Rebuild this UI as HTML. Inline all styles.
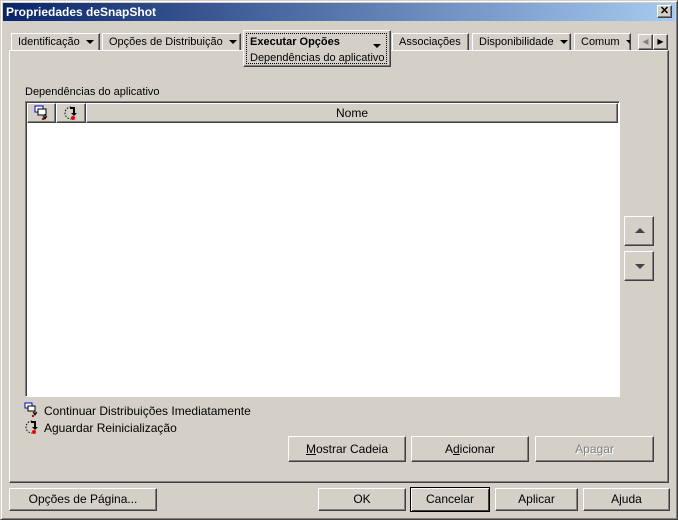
<!DOCTYPE html><html><head><style>
*{box-sizing:border-box}
body{margin:0;width:678px;height:520px;background:#d4d0c8;font-family:"Liberation Sans",sans-serif;font-size:11px;position:relative;overflow:hidden;color:#000}
.a{position:absolute}
.win{left:0;top:0;width:678px;height:520px;border:1px solid;border-color:#d4d0c8 #404040 #404040 #d4d0c8;box-shadow:inset 1px 1px #fff,inset -1px -1px #808080}
.title{left:3px;top:3px;width:672px;height:18px;background:linear-gradient(90deg,#0a246a,#a6caf0);color:#fff;font-weight:bold;font-size:12px;padding:2px 3px}
.btn{position:absolute;background:#d4d0c8;border:1px solid;border-color:#fff #404040 #404040 #fff;box-shadow:inset -1px -1px #808080;text-align:center;line-height:20px}
.tab{position:absolute;top:33px;height:17px;border:1px solid;border-color:#fff #404040 transparent #fff;border-bottom:none;box-shadow:inset -1px 0 #808080;padding:2px 6px;white-space:nowrap}
.tri{display:inline-block;width:0;height:0;border-left:4px solid transparent;border-right:4px solid transparent;border-top:4px solid #000;vertical-align:middle;margin-left:6px}
u{text-decoration:underline}
</style></head><body>
<div class="a win"></div>
<div class="a title">Propriedades deSnapShot</div>
<div class="btn" style="left:657px;top:5px;width:15px;height:13px;line-height:11px;font-size:11px;font-weight:bold">✕</div>
<!-- panel -->
<div class="a" style="left:9px;top:50px;width:660px;height:433px;border:1px solid;border-color:#fff #404040 #404040 #fff;box-shadow:inset -1px -1px #808080"></div>
<div class="tab" style="left:11px;width:89px">Identificação<span class="tri"></span></div>
<div class="tab" style="left:102px;width:139px">Opções de Distribuição<span class="tri"></span></div>
<div class="a" style="left:243px;top:30px;width:148px;height:37px;background:#d4d0c8;border:1px solid;border-color:#fff #404040 #404040 #fff;box-shadow:inset -1px -1px #808080"></div>
<div class="a" style="left:246px;top:33px;width:141px;height:31px;border:1px dotted #000"></div>
<div class="a" style="left:250px;top:36px;font-weight:bold">Executar Opções</div>
<div class="a" style="left:373px;top:40px"><span class="tri" style="margin:0"></span></div>
<div class="a" style="left:250px;top:52px">Dependências do aplicativo</div>
<div class="tab" style="left:392px;width:77px">Associações</div>
<div class="tab" style="left:472px;width:99px">Disponibilidade<span class="tri"></span></div>
<div class="tab" style="left:574px;width:57px;overflow:hidden">Comum<span class="tri"></span></div>
<div class="btn" style="left:638px;top:34px;width:15px;height:16px;color:#808080;font-size:8px;line-height:14px">◀</div>
<div class="btn" style="left:653px;top:34px;width:15px;height:16px;font-size:8px;line-height:14px">▶</div>
<div class="a" style="left:25px;top:86px">Dependências do aplicativo</div>
<!-- list -->
<div class="a" style="left:25px;top:101px;width:595px;height:296px;background:#fff;border:1px solid;border-color:#808080 #fff #fff #808080;box-shadow:inset 1px 1px #404040"></div>
<div class="btn" style="left:27px;top:103px;width:29px;height:20px"><svg width="16" height="16" style="margin-top:1px"><rect x="1" y="1" width="8" height="6" fill="#fff" stroke="#00c"/><rect x="4" y="4" width="8" height="6" fill="#fff" stroke="#000"/><path d="M11 9v4M9 11l2 3 2-3" stroke="#000" fill="none"/><circle cx="9" cy="14" r="1.2" fill="#c00"/></svg></div>
<div class="btn" style="left:56px;top:103px;width:30px;height:20px"><svg width="16" height="16" style="margin-top:1px"><path d="M8 2a6 6 0 1 0 0 12" stroke="#000" stroke-dasharray="1.5 1.5" fill="none"/><path d="M7 3h4v5" stroke="#000" stroke-width="2" fill="none"/><path d="M8 8h6l-3 3z" fill="#000"/><circle cx="10" cy="13" r="2" fill="#e00"/></svg></div>
<div class="btn" style="left:86px;top:103px;width:532px;height:20px;line-height:18px;font-size:12px">Nome</div>
<div class="btn" style="left:624px;top:216px;width:30px;height:30px"><span class="a" style="left:10px;top:11px;border-left:5px solid transparent;border-right:5px solid transparent;border-bottom:5px solid #444"></span></div>
<div class="btn" style="left:624px;top:251px;width:30px;height:30px"><span class="a" style="left:10px;top:12px;border-left:5px solid transparent;border-right:5px solid transparent;border-top:5px solid #444"></span></div>
<!-- legend -->
<svg class="a" style="left:24px;top:402px" width="16" height="16"><rect x="1" y="1" width="7" height="5" fill="#fff" stroke="#00c"/><rect x="4" y="4" width="7" height="5" fill="#fff" stroke="#000"/><path d="M11 8v4M9 10l2 3 2-3" stroke="#000" fill="none"/><circle cx="9" cy="14" r="1.2" fill="#c00"/></svg>
<div class="a" style="left:44px;top:404px;font-size:12px">Continuar Distribuições Imediatamente</div>
<svg class="a" style="left:24px;top:419px" width="16" height="16"><path d="M8 2a6 6 0 1 0 0 12" stroke="#000" stroke-dasharray="1.5 1.5" fill="none"/><path d="M7 3h4v5" stroke="#000" stroke-width="2" fill="none"/><path d="M8 8h6l-3 3z" fill="#000"/><circle cx="10" cy="13" r="2" fill="#e00"/></svg>
<div class="a" style="left:44px;top:421px;font-size:12px">Aguardar Reinicialização</div>
<div class="btn" style="left:288px;top:436px;width:118px;height:26px;line-height:24px;font-size:12px"><u>M</u>ostrar Cadeia</div>
<div class="btn" style="left:411px;top:436px;width:118px;height:26px;line-height:24px;font-size:12px">A<u>d</u>icionar</div>
<div class="btn" style="left:535px;top:436px;width:119px;height:26px;line-height:24px;font-size:12px;color:#808080;text-shadow:1px 1px #fff">Apa<u>g</u>ar</div>
<div class="btn" style="left:9px;top:488px;width:148px;height:23px;font-size:12px">Opções de Pá<u>g</u>ina...</div>
<div class="btn" style="left:318px;top:488px;width:88px;height:23px;font-size:12px">OK</div>
<div class="btn" style="left:410px;top:487px;width:80px;height:25px;font-size:12px;border:1px solid #000;line-height:22px;box-shadow:inset 1px 1px #fff,inset -1px -1px #404040">Cancelar</div>
<div class="btn" style="left:495px;top:488px;width:83px;height:23px;font-size:12px">Aplicar</div>
<div class="btn" style="left:583px;top:488px;width:87px;height:23px;font-size:12px">Ajuda</div>
</body></html>
